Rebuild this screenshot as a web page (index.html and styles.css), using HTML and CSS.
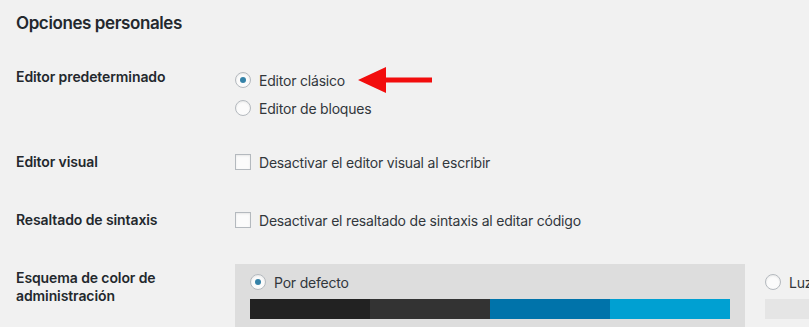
FILE: index.html
```html
<!DOCTYPE html>
<html lang="es">
<head>
<meta charset="utf-8">
<link rel="stylesheet" href="styles.css">
</head>
<body>
<div class="page">
  <h2 class="title">Opciones personales</h2>
  <div class="row row-editor">
    <div class="label">Editor predeterminado</div>
    <div class="field">
      <div class="option">
        <span class="radio checked"></span>
        <span class="opt-text">Editor clásico</span>
        <svg class="arrow" width="74" height="28" viewBox="0 0 74 28"><polygon points="0,14 28,1 28,11.5 74,11.5 74,16.5 28,16.5 28,27" fill="#f20d0d"/></svg>
      </div>
      <div class="option">
        <span class="radio"></span>
        <span class="opt-text">Editor de bloques</span>
      </div>
    </div>
  </div>
  <div class="row row-visual">
    <div class="label">Editor visual</div>
    <div class="field">
      <div class="option">
        <span class="checkbox"></span>
        <span class="opt-text">Desactivar el editor visual al escribir</span>
      </div>
    </div>
  </div>
  <div class="row row-syntax">
    <div class="label">Resaltado de sintaxis</div>
    <div class="field">
      <div class="option">
        <span class="checkbox"></span>
        <span class="opt-text">Desactivar el resaltado de sintaxis al editar código</span>
      </div>
    </div>
  </div>
  <div class="row row-scheme">
    <div class="label label-scheme">Esquema de color de<br>administración</div>
    <div class="schemes">
      <div class="scheme selected">
        <div class="scheme-head">
          <span class="radio checked"></span>
          <span class="opt-text">Por defecto</span>
        </div>
        <div class="strip">
          <span class="sw sw1"></span><span class="sw sw2"></span><span class="sw sw3"></span><span class="sw sw4"></span>
        </div>
      </div>
      <div class="scheme">
        <div class="scheme-head">
          <span class="radio"></span>
          <span class="opt-text">Luz</span>
        </div>
        <div class="strip strip-light"></div>
      </div>
    </div>
  </div>
</div>
</body>
</html>
```

FILE: styles.css
```css
html, body {
  margin: 0;
  padding: 0;
  background: #f1f1f1;
  overflow: hidden;
}
body {
  width: 809px;
  height: 327px;
  font-family: Inter, "Noto Sans", sans-serif;
  font-size: 14px;
  color: #23282d;
}
.page {
  padding-left: 16px;
}
.title {
  margin: 0;
  padding-top: 13px;
  font-size: 17px;
  line-height: 20px;
  font-weight: 600;
  letter-spacing: -0.4px;
  color: #23282d;
}
.row {
  display: grid;
  grid-template-columns: 219px 1fr;
}
.row-editor { margin-top: 33px; }
.row-visual { margin-top: 29px; }
.row-syntax { margin-top: 36px; }
.row-scheme { margin-top: 33px; }
.label {
  font-weight: 600;
  line-height: 22px;
  font-size: 14px;
  letter-spacing: -0.1px;
}
.label-scheme {
  line-height: 18px;
  padding-top: 5px;
}
.row-editor .option { height: 28px; }
.option {
  display: flex;
  align-items: center;
  height: 22px;
}
.opt-text {
  color: #32373c;
  font-size: 14px;
  letter-spacing: -0.2px;
}
.radio {
  box-sizing: border-box;
  width: 16px;
  height: 16px;
  border-radius: 50%;
  border: 1px solid #b4b9be;
  background: #fbfbfb;
  box-shadow: inset 0 1px 2px rgba(0,0,0,0.08);
  margin-right: 8px;
  display: flex;
  align-items: center;
  justify-content: center;
  flex: none;
}
.radio.checked::after {
  content: "";
  width: 6px;
  height: 6px;
  border-radius: 50%;
  background: #3582a8;
}
.checkbox {
  box-sizing: border-box;
  width: 16px;
  height: 16px;
  border: 1px solid #b4b9be;
  background: #fbfbfb;
  box-shadow: inset 0 1px 2px rgba(0,0,0,0.08);
  margin-right: 8px;
  flex: none;
}
.arrow {
  margin-left: 13px;
  flex: none;
}
.schemes {
  display: flex;
  gap: 5px;
}
.scheme {
  box-sizing: border-box;
  width: 510px;
  padding: 10px 15px 15px 15px;
  flex: none;
}
.scheme.selected {
  background: #dddddd;
}
.scheme-head {
  display: flex;
  align-items: center;
  height: 16px;
  margin-bottom: 9px;
}
.strip {
  display: flex;
  height: 20px;
}
.sw { flex: 1; }
.sw1 { background: #222222; }
.sw2 { background: #333333; }
.sw3 { background: #0073aa; }
.sw4 { background: #00a0d2; }
.strip-light { background: #e5e5e5; }
```
